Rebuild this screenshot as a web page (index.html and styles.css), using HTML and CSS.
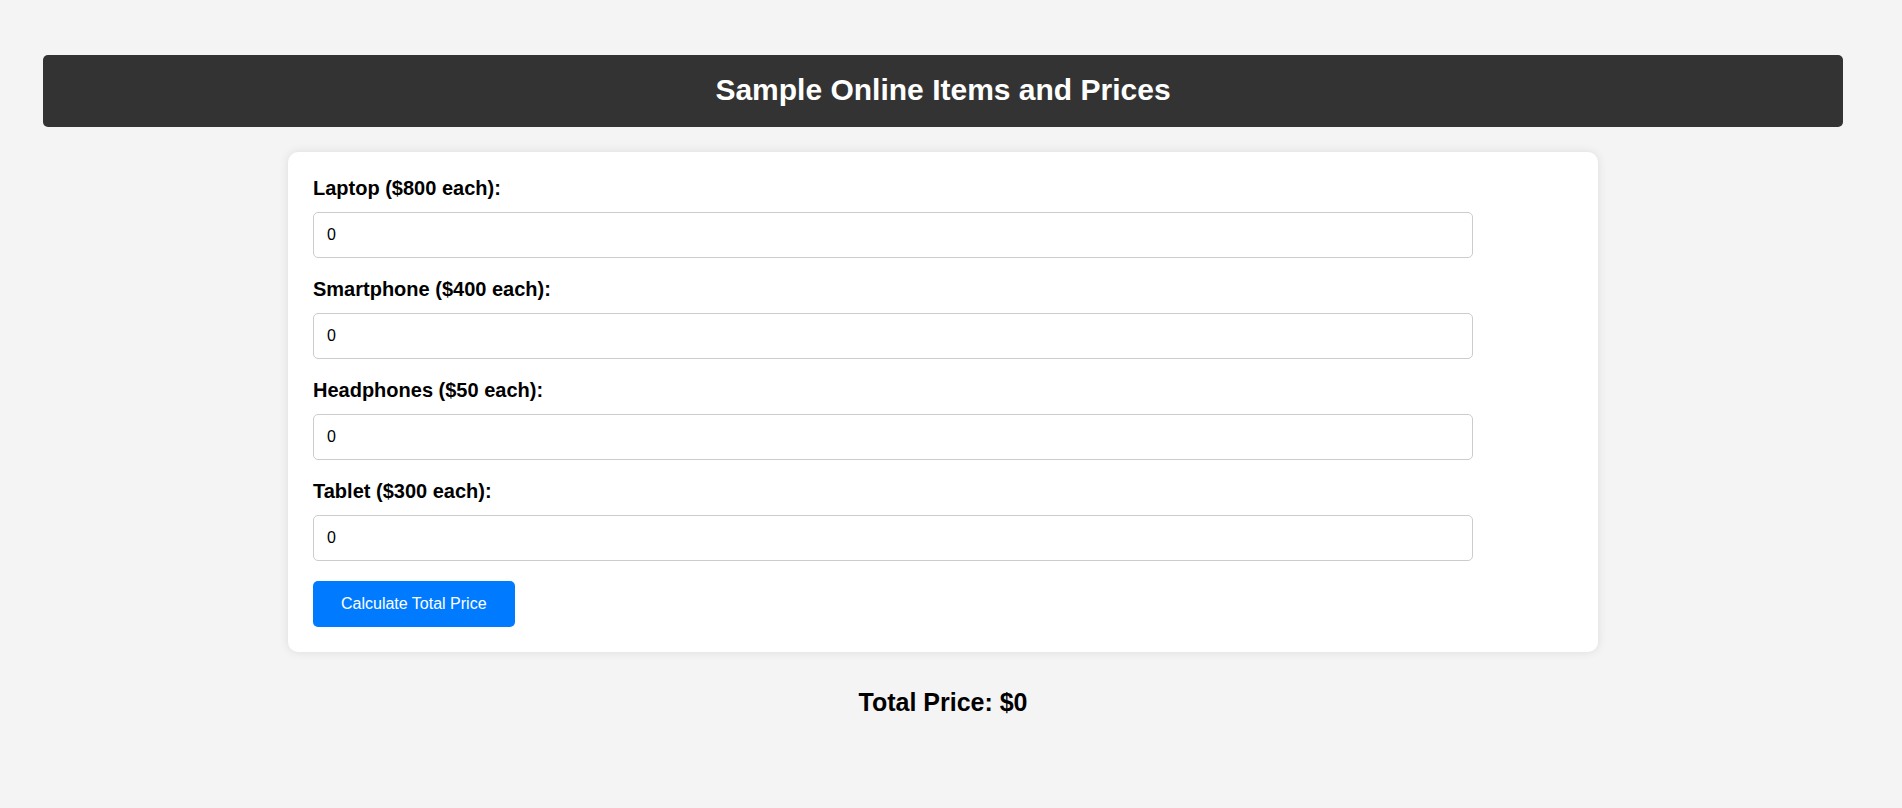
FILE: index.html
```html
<!DOCTYPE html>
<html lang="en">
<head>
<meta charset="utf-8">
<title>Sample Online Items and Prices</title>
<link rel="stylesheet" href="styles.css">
</head>
<body>
<div class="page">
  <header class="banner">
    <h1 class="banner-title">Sample Online Items and Prices</h1>
  </header>
  <form class="card">
    <label class="field-label" for="laptop">Laptop ($800 each):</label>
    <input class="field-input" id="laptop" type="number" value="0">
    <label class="field-label" for="smartphone">Smartphone ($400 each):</label>
    <input class="field-input" id="smartphone" type="number" value="0">
    <label class="field-label" for="headphones">Headphones ($50 each):</label>
    <input class="field-input" id="headphones" type="number" value="0">
    <label class="field-label" for="tablet">Tablet ($300 each):</label>
    <input class="field-input" id="tablet" type="number" value="0">
    <button class="calc-btn" type="button">Calculate Total Price</button>
  </form>
  <h2 class="total">Total Price: $0</h2>
</div>
</body>
</html>
```
FILE: styles.css
```css
html, body {
  margin: 0;
  padding: 0;
  background: #f4f4f4;
  font-family: "Liberation Sans", Arial, sans-serif;
  color: #000;
}

.page {
  width: 1886px;
  padding-top: 55px;
  display: flex;
  flex-direction: column;
  align-items: center;
}

.banner {
  width: 1800px;
  height: 72px;
  background: #333333;
  border-radius: 5px;
  display: flex;
  align-items: center;
  justify-content: center;
}

.banner-title {
  margin: 0;
  color: #fff;
  font-size: 30px;
  font-weight: bold;
  line-height: 34px;
  position: relative;
  top: -1px;
}

.card {
  box-sizing: border-box;
  width: 1310px;
  margin-top: 25px;
  padding: 25px;
  background: #fff;
  border-radius: 10px;
  box-shadow: 0 0 10px rgba(0, 0, 0, 0.1);
  display: flex;
  flex-direction: column;
  align-items: flex-start;
}

.field-label {
  display: block;
  font-size: 20px;
  font-weight: bold;
  line-height: 23px;
  margin-bottom: 12px;
}

.field-input {
  box-sizing: border-box;
  width: 1160px;
  height: 46px;
  margin: 0 0 20px 0;
  padding: 0 13px;
  border: 1px solid #cccccc;
  border-radius: 5px;
  font-family: "Liberation Sans", Arial, sans-serif;
  font-size: 16px;
  color: #000;
  background: #fff;
  -moz-appearance: textfield;
}

.field-input::-webkit-outer-spin-button,
.field-input::-webkit-inner-spin-button {
  -webkit-appearance: none;
  margin: 0;
}

.calc-btn {
  box-sizing: border-box;
  height: 46px;
  padding: 0 28px;
  border: none;
  border-radius: 5px;
  background: #007bff;
  color: #fff;
  font-family: "Liberation Sans", Arial, sans-serif;
  font-size: 16px;
  cursor: pointer;
}

.total {
  margin: 36px 0 0 0;
  font-size: 25px;
  font-weight: bold;
  line-height: 29px;
}
```
